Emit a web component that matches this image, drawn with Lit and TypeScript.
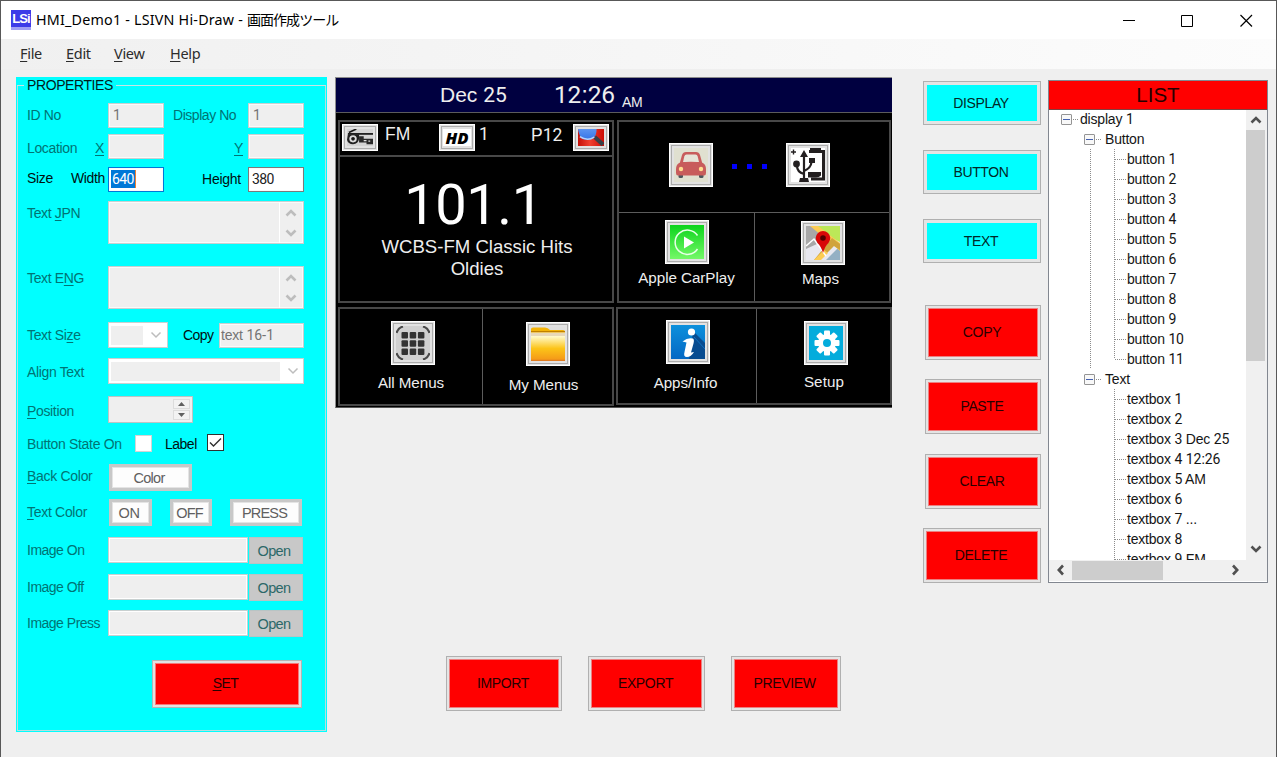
import { LitElement, html, css, svg } from "lit";
import { customElement, property } from "lit/decorators.js";
import { classMap } from "lit/directives/class-map.js";

/** Numerals are set in their own face, the rest in the inherited one. */
const num = (s: string) =>
  s.split(/(\d+)/).map((p) => (/^\d/.test(p) ? html`<span class="n">${p}</span>` : p));

/** Label with one mnemonic letter, marked by a leading "&". */
const mn = (s: string) => {
  const i = s.indexOf("&");
  return i < 0 ? html`${s}` : html`${s.slice(0, i)}<u>${s[i + 1]}</u>${s.slice(i + 2)}`;
};

const chevron = (dir: "up" | "down" | "left" | "right", color = "#505050", w = 2.6) => {
  const d = {
    up: "M1.500 8.500 6 4 10.500 8.500",
    down: "M1.500 3.500 6 8 10.500 3.500",
    left: "M8 1.500 3.800 6 8 10.500",
    right: "M4 1.500 8.200 6 4 10.500",
  }[dir];
  return html`<svg width="12" height="12" viewBox="0 0 12 12" fill="none" stroke=${color} stroke-width=${w}><path d=${d} /></svg>`;
};

const icons: Record<string, unknown> = {
  car: svg`<rect width="34" height="34" fill="#e0e0d0"/>
    <rect x="4.500" y="24" width="4.500" height="6" rx="1.500" fill="#4c545c"/><rect x="25" y="24" width="4.500" height="6" rx="1.500" fill="#4c545c"/>
    <path d="M5.500 16 8 7Q9 4 12 4h10Q25 4 26 7L28.500 16Z" fill="#c85c5c"/>
    <path d="M9 14 10.300 8.500Q10.800 6.500 12.500 6.500h9Q23.200 6.500 23.700 8.500L25 14Z" fill="#e6e4d8"/>
    <path d="M5 15Q17 12.500 29 15 32 17 32 21v4Q32 27.500 30 27.500H4Q2 27.500 2 25v-4Q2 17 5 15Z" fill="#c85c5c"/>
    <circle cx="7" cy="21" r="2.200" fill="#ffdc90"/><circle cx="27" cy="21" r="2.200" fill="#ffdc90"/>`,
  usb: svg`<rect width="34" height="34" fill="#fff"/>
    <g stroke="#231f20" fill="none"><path d="M2.500 1.500v5M0 4h5" stroke-width="1.400"/>
    <path d="M13 6v25M13 26Q6 24 6 18M13 23Q20 20 20.500 14" stroke-width="2.200"/>
    <path d="M18 3.500h14.500V31H20" stroke-width="3"/></g>
    <g fill="#231f20"><path d="M13 2 17 9H9ZM9 30h8l1 4H8Z"/><circle cx="5.500" cy="16" r="3.400"/>
    <path d="M18 10h6v5h-6ZM19 0h11v4H19ZM17 24h13v3.500q-2 2-5 2h-8Z"/></g>`,
  carplay: svg`<defs><linearGradient id="cp" x2="0" y2="1"><stop stop-color="#0cd41c"/><stop offset="1" stop-color="#74f868"/></linearGradient></defs>
    <rect width="34" height="34" fill="url(#cp)"/>
    <path d="M27.500 10.500A12.200 12.200 0 1 0 27.500 24" fill="none" stroke="#e8ffe8" stroke-width="1.500"/><path d="M14 11.500v12L24 17.500Z" fill="#fff"/>`,
  maps: svg`<rect width="34" height="34" fill="#e8e8f0"/><path d="M0 0h9L22 13 0 23Z" fill="#a8a8a8"/>
    <path d="M10 0h24v16L26 12Z" fill="#bce858"/><path d="M34 20v14H20Z" fill="#94b0c4"/>
    <path d="M4 0h8L34 17v8L26 18Z" fill="#fccc54"/><path d="M26 12 34 18v6l-6-4-14 14H8Z" fill="#d0a43c"/><path d="M8 34 18 24l4 3-7 7Z" fill="#fccc54"/>
    <path d="M0 20 8 13 20 30" fill="none" stroke="#fff" stroke-width="1.500"/>
    <path d="M17 27Q15 20 11.500 17A7.300 7.300 0 1 1 22.500 17Q19 20 17 27Z" fill="#d80808"/><circle cx="17" cy="12" r="2.800" fill="#500"/>`,
  menus: svg`<rect width="34" height="34" rx="6" fill="#d0d0d0"/>
    <path d="M.5 7Q2 2 7 .5M27 .5Q32 2 33.500 7M33.500 27Q32 32 27 33.500M7 33.500Q2 32 .5 27" fill="none" stroke="#484848" stroke-width="2.200"/>
    ${[0, 1, 2].map((r) => [0, 1, 2].map((c) => svg`<rect x=${5.5 + c * 8.2} y=${6 + r * 8.2} width="6.500" height="6.500" rx="1" fill="#333"/>`))}`,
  folder: svg`<defs><linearGradient id="fo" x2="0" y2="1"><stop stop-color="#fffbd0"/><stop offset=".5" stop-color="#fcc418"/><stop offset="1" stop-color="#f49418"/></linearGradient></defs>
    <rect width="34" height="34" fill="#e0e0e0"/><path d="M0 33V2Q0 .5 2 .5h12q3 0 5 2.500h13q2 0 2 2v28Z" fill="#f4b408"/>
    <path d="M0 5.500h34V9H0Z" fill="#e8d8b8"/><path d="M0 4.500h34" stroke="#c08000" stroke-width="1"/>
    <rect y="9" width="34" height="25" fill="url(#fo)"/><path d="M0 33.300h34" stroke="#e07c20" stroke-width="1.300"/>`,
  info: svg`<defs><linearGradient id="in" x2="0" y2="1"><stop stop-color="#0c90dc"/><stop offset="1" stop-color="#0468c4"/></linearGradient></defs>
    <rect width="34" height="34" fill="url(#in)"/><path d="M22 6 34 18v16H18L21 14Z" fill="#084c90"/><path d="M23 12 34 24" stroke="#1070c0"/>
    <circle cx="20.500" cy="7" r="3.600" fill="#fff"/><path d="M11.500 16.500Q17 12 22 13.500q1.500 1 .5 5l-2.500 9 3-.5Q20 32 16 32t-2.500-5l2-9.500Z" fill="#fff"/>`,
  setup: svg`<rect width="34" height="34" fill="#04acdc"/><g transform="translate(18 17)" fill="#fff">
    ${[0, 45, 90, 135].map((a) => svg`<rect x="-3" y="-12.500" width="6" height="25" rx="1" transform=${`rotate(${a})`}/>`)}
    <circle r="9"/><circle r="4" fill="#04acdc"/></g>`,
  radio: svg`<rect width="28" height="19" fill="#d4d4d4"/><path d="M2 4 10 0" stroke="#181818" stroke-width="1.800"/>
    <path d="M1 5.500H28" stroke="#202020" stroke-width="2"/>
    <path d="M1 6h12v5q-1 6-6.500 6T0 12Z" fill="#202020"/><circle cx="6.500" cy="11" r="4" fill="#ddd"/><circle cx="6.500" cy="11" r="2" fill="#181818"/>
    <path d="M13 8h5v3h10v6h-7v-2h-8Z" fill="#282828"/><path d="M18 13h3M23 13.500h2" stroke="#ddd" stroke-width="1.500"/>`,
  search: svg`<defs><linearGradient id="se" x2="0" y2="1"><stop stop-color="#5c94f0"/><stop offset="1" stop-color="#3474e8"/></linearGradient>
    <linearGradient id="rd"><stop stop-color="#c41008"/><stop offset=".45" stop-color="#f04030"/><stop offset="1" stop-color="#cc0c04"/></linearGradient></defs>
    <rect width="28" height="19" fill="url(#rd)"/><path d="M18 9 27 17.500" stroke="#384048" stroke-width="4.500"/>
    <path d="M0 0H20Q20 8 16 10.500 10 13.500 4 10.500 1 7 0 0Z" fill="url(#se)"/><path d="M2 8.500Q10 14 17.500 9" stroke="#b4d4fc" stroke-width="1.600" fill="none"/>`,
};

@customElement("hmi-tile")
export class HmiTile extends LitElement {
  @property() icon = "";
  @property({ type: Boolean }) small = false;
  static styles = css`
    :host { display: block; flex: none; }
    .tile { box-sizing: border-box; width: 44px; height: 44px; border: 1px solid #fff; background: #e2e2e2; padding: 1px; }
    .tile.small { width: 36px; height: 27px; }
    .inner { box-sizing: border-box; width: 100%; height: 100%; border: 1px solid #acacac; display: flex; align-items: center; justify-content: center; }
    .hd { background: #fff; width: 28px; height: 17px; font: italic 900 16.500px/18px "Open Sans", sans-serif; color: #000; text-align: center; }
    svg { display: block; }
  `;
  render() {
    const s = this.small;
    return html`<div class=${classMap({ tile: true, small: s })}><div class="inner">
      ${this.icon === "hd"
        ? html`<div class="hd">HD</div>`
        : html`<svg width=${s ? 26 : 34} height=${s ? 17 : 34} viewBox=${s ? "0 0 28 19" : "0 0 34 34"} preserveAspectRatio="none">${icons[this.icon]}</svg>`}
    </div></div>`;
  }
}

@customElement("hmi-screen")
export class HmiScreen extends LitElement {
  static styles = css`
    :host { display: block; box-sizing: border-box; width: 557px; height: 331px; background: #000; border: 1px solid #8c8c8c; border-right: 0; border-bottom-color: #555; font-family: "Liberation Sans", Arial, sans-serif; color: #eee; }
    * { box-sizing: border-box; }
    .n { font-family: Roboto, sans-serif; }
    .head { height: 35px; background: #000040; border-bottom: 1px solid #5c5c5c; display: flex; white-space: nowrap; }
    .date { margin-left: 104px; width: 114px; font-size: 21px; line-height: 33px; }
    .time { width: 68px; font-size: 24.500px; line-height: 34px; letter-spacing: -.2px; }
    .ampm { font-size: 14px; line-height: 16px; padding-top: 16px; letter-spacing: -.3px; }
    .cols { display: flex; margin-top: 7px; padding-left: 2px; gap: 2px; }
    .box { border: 2px solid #484848; }
    .left { width: 277px; }
    .radio { width: 276px; height: 183px; }
    .tuner { height: 35px; border-bottom: 2px solid #484848; display: flex; padding: 2px 0 0 2px; line-height: 20px; font-size: 17.500px; }
    .fm { width: 54px; margin-left: 7px; }
    .chan { width: 41px; margin-left: 4px; }
    .preset { width: 42px; margin-left: 11px; line-height: 23px; }
    .freq { font: 56px/60px Roboto, sans-serif; text-align: center; margin: 18px 10px 0 0; padding-left: 5px; color: #fff; letter-spacing: -.4px; }
    .station { font-size: 18.600px; line-height: 21.500px; text-align: center; margin-top: 1px; padding-left: 2px; }
    .source { width: 274px; height: 183px; margin-left: 1px; }
    .top { height: 91px; border-bottom: 1px solid #5c5c5c; display: flex; padding: 21px 0 0 50px; }
    .dots { display: flex; gap: 10px; padding: 21px 19px 0 19px; }
    .dots i { width: 5px; height: 5px; background: #00f; }
    .pair { display: flex; height: 88px; }
    .cell { flex: none; display: flex; flex-direction: column; align-items: center; font-size: 15.200px; line-height: 18px; white-space: nowrap; letter-spacing: -.05px; }
    .cell + .cell { border-left: 1px solid #5c5c5c; }
    .play { width: 135px; padding-top: 7px; }
    .map { flex: 1; padding-top: 8px; padding-left: 1px; }
    .play span, .map span { margin-top: 5px; }
    .map span { margin-right: 4px; }
    .dock { margin-top: 4px; height: 99px; display: flex; }
    .all { width: 142px; padding-top: 12px; padding-left: 4px; }
    .my { flex: 1; padding-top: 13px; padding-right: 0; }
    .apps { width: 138px; padding-top: 11px; padding-left: 2px; }
    .setup { flex: 1; padding-top: 12px; padding-left: 4px; }
    .all span { margin: 9px 4px 0 0; }
    .my span { margin: 10px 8px 0 0; }
    .apps span { margin: 10px 5px 0 0; }
    .setup span { margin: 8px 3px 0 0; letter-spacing: .1px; }
    .right .dock { width: 276px; margin-left: 0; height: 98px; }
  `;
  render() {
    return html`
      <div class="head"><div class="date">Dec ${num("25")}</div><div class="time">${num("12:26")}</div><div class="ampm">AM</div></div>
      <div class="cols">
        <div class="left">
          <div class="box radio">
            <div class="tuner">
              <hmi-tile small icon="radio"></hmi-tile><span class="fm">FM</span>
              <hmi-tile small icon="hd"></hmi-tile><span class="chan">${num("1")}</span>
              <span class="preset">${num("P12")}</span><hmi-tile small icon="search"></hmi-tile>
            </div>
            <div class="freq">101.1</div>
            <div class="station">WCBS-FM Classic Hits<br />Oldies</div>
          </div>
          <div class="box dock">
            <div class="cell all"><hmi-tile icon="menus"></hmi-tile><span>All Menus</span></div>
            <div class="cell my"><hmi-tile icon="folder"></hmi-tile><span>My Menus</span></div>
          </div>
        </div>
        <div class="right">
          <div class="box source">
            <div class="top"><hmi-tile icon="car"></hmi-tile><div class="dots"><i></i><i></i><i></i></div><hmi-tile icon="usb"></hmi-tile></div>
            <div class="pair">
              <div class="cell play"><hmi-tile icon="carplay"></hmi-tile><span>Apple CarPlay</span></div>
              <div class="cell map"><hmi-tile icon="maps"></hmi-tile><span>Maps</span></div>
            </div>
          </div>
          <div class="box dock">
            <div class="cell apps"><hmi-tile icon="info"></hmi-tile><span>Apps/Info</span></div>
            <div class="cell setup"><hmi-tile icon="setup"></hmi-tile><span>Setup</span></div>
          </div>
        </div>
      </div>`;
  }
}

@customElement("props-panel")
export class PropsPanel extends LitElement {
  static styles = css`
    :host { display: block; width: 311px; height: 655px; background: #0ff; font: 14px/18px "Liberation Sans", Arial, sans-serif; letter-spacing: -.35px; color: #007474; white-space: nowrap; }
    * { box-sizing: border-box; }
    .n { font-family: Roboto, sans-serif; }
    u { text-underline-offset: 2px; }
    svg { display: block; }
    .legend { display: flex; align-items: center; height: 16px; color: #001c1c; letter-spacing: -.4px; }
    .legend::before { content: ""; width: 7px; height: 1px; background: #c8e4e4; margin: 0 3px 0 1px; }
    .legend::after { content: ""; flex: 1; height: 1px; background: #c8e4e4; margin: 0 1px 0 3px; }
    .frame { margin: -8px 1px 0; height: 646px; border: 1px solid #b8dcdc; border-top: 0; padding: 18px 0 0 9px; }
    .row { display: flex; align-items: flex-start; }
    .label { width: 81px; flex: none; }
    .on { color: #001010; }
    .field { width: 56px; height: 25px; flex: none; background: #efefef; border: 1px solid #c8d0d0; box-shadow: inset 0 0 0 1px #fafafa; padding: 0 4px; line-height: 23px; color: #747474; }
    .active { background: #fff; color: #222; border-color: #7a7a7a; padding-left: 3px; letter-spacing: -.6px; }
    .focus { border-color: #0078d7; padding-left: 2px; }
    .sel { background: #0078d7; color: #fff; display: inline-block; height: 18px; line-height: 18px; padding: 0 1px; border-right: 1px solid #f08030; }
    .id { height: 31px; } .loc { height: 33px; } .size { height: 33.500px; }
    .id .label { padding-top: 3px; }
    .id .mid { width: 84px; padding: 3px 0 0 9px; letter-spacing: -.45px; }
    .split { display: flex; justify-content: space-between; padding-right: 4px; }
    .loc .label { padding-top: 5px; } .loc .mid { width: 84px; padding: 5px 5px 0 0; text-align: right; }
    .size .label { padding-right: 3px; padding-top: 2px; } .size .mid { width: 84px; padding: 3px 7px 0 0; text-align: right; letter-spacing: -.25px; }
    .area { width: 196px; height: 43px; background: #efefef; border: 1px solid #c8d0d0; box-shadow: inset 0 0 0 1px #fafafa; display: flex; justify-content: flex-end; }
    .bar { width: 24px; border-left: 1px solid #fff; display: flex; flex-direction: column; justify-content: space-between; align-items: center; padding: 5px 2px 4px 0; }
    .ta { height: 65px; } .ta .label { padding-top: 3px; } .ta2 { height: 56.500px; }
    .combo { width: 60px; height: 26px; border: 1px solid #c8d0d0; background: #fff; padding: 2px 5px 2px 2px; display: flex; align-items: center; }
    .combo i { flex: 1; height: 19px; background: #efefef; margin-right: 7px; }
    .combo.wide { width: 196px; } .combo.wide { padding-right: 4px; }
    .ts { height: 36px; } .ts .label { padding-top: 4px; }
    .ts .copy { width: 51px; padding: 4px 0 0 15px; letter-spacing: -.6px; } .ts .field { width: 85px; padding: 0 1px; margin-top: 1px; letter-spacing: -.2px; }
    .al { height: 38px; } .al .label { padding-top: 5px; }
    .po { height: 38px; } .po .label { padding-top: 6px; }
    .spin { width: 85px; height: 27px; background: #efefef; border: 1px solid #bcc4c4; padding: 2px; display: flex; justify-content: flex-end; }
    .arrows { width: 17px; display: grid; grid-template-rows: 1fr 1fr; gap: 1px; }
    .arrows b { border: 1px solid #dcdcdc; background: #f2f2f2; display: flex; align-items: center; justify-content: center; }
    .bs { height: 30px; padding-top: 1px; } .bs .label { width: 108px; padding-top: 0; letter-spacing: -.33px; }
    .bs .lbl { width: 72px; padding-left: 13px; letter-spacing: -.5px; }
    .bs .lbl { width: 55px; }
    .chk { width: 17px; height: 17px; flex: none; background: #fff; border: 1px solid #d4d4d4; }
    .chk.ticked { border: 1px solid #303030; margin-top: -1px; }
    .bc { height: 35px; } .bc .label, .tc .label { width: 82px; padding-top: 3px; letter-spacing: -.3px; } .tc { height: 38px; } .tc .label { padding-top: 4px; }
    .btn { height: 27px; border: 3px solid #c8c8c8; background: #fdfdfd; box-shadow: inset 0 0 0 1px #e4e4e4; color: #606060; text-align: center; line-height: 22px; flex: none; font-size: 14.500px; }
    .b1 { width: 83px; padding-right: 3px; letter-spacing: -.7px; } .b2 { width: 43px; margin-right: 18px; padding-right: 3px; letter-spacing: -.3px; } .b3 { width: 42px; margin-right: 18px; padding-right: 3px; letter-spacing: -.8px; } .b4 { width: 72px; padding-right: 3px; letter-spacing: -.8px; }
    .im { height: 36.700px; } .im .label { padding-top: 4px; letter-spacing: -.5px; } .im .field { width: 140px; height: 26px; box-shadow: inset 0 0 0 1px #fff; }
    .open { width: 54px; height: 27px; background: #c8c8c8; border: 1px solid #b8c4c4; margin-left: 1px; line-height: 26px; text-align: center; color: #2c6868; font-size: 14.500px; padding-right: 4px; letter-spacing: -.6px; }
    .set { margin: 13px 0 0 125px; width: 150px; height: 48px; background: #f00; border: 1px solid #b4b4b4; box-shadow: inset 0 0 0 2px #e1e1e1, inset 0 0 0 3px #f47878; color: #280000; text-align: center; line-height: 44px; padding-right: 3px; letter-spacing: -.5px; }
  `;
  private area(label: string, second = false) {
    return html`<div class=${classMap({ row: true, ta: true, ta2: second })}>
      <div class="label">${mn(label)}</div>
      <div class="area"><div class="bar">${chevron("up", "#bdbdbd")}${chevron("down", "#bdbdbd")}</div></div>
    </div>`;
  }
  render() {
    return html`
      <div class="legend">PROPERTIES</div>
      <div class="frame">
        <div class="row id"><div class="label">ID No</div><div class="field">${num("1")}</div><div class="mid">Display No</div><div class="field">${num("1")}</div></div>
        <div class="row loc"><div class="label split"><span>Location</span><u>X</u></div><div class="field"></div><div class="mid"><u>Y</u></div><div class="field"></div></div>
        <div class="row size on"><div class="label split"><span>Size</span><span>Width</span></div><div class="field active focus"><span class="sel">${num("640")}</span></div><div class="mid">Height</div><div class="field active">${num("380")}</div></div>
        ${this.area("Text &JPN")} ${this.area("Text E&NG", true)}
        <div class="row ts"><div class="label">${mn("Text Si&ze")}</div><div class="combo"><i></i>${chevron("down", "#bdbdbd", 1.5)}</div><div class="copy on">Copy</div><div class="field">text ${num("16-1")}</div></div>
        <div class="row al"><div class="label">Align Text</div><div class="combo wide"><i></i>${chevron("down", "#bdbdbd", 1.5)}</div></div>
        <div class="row po"><div class="label">${mn("&Position")}</div>
          <div class="spin"><div class="arrows">
            <b><svg width="7" height="4"><path d="M0 4 3.500 0 7 4Z" fill="#606060" /></svg></b>
            <b><svg width="7" height="4"><path d="M0 0 3.500 4 7 0Z" fill="#606060" /></svg></b>
          </div></div>
        </div>
        <div class="row bs"><div class="label">Button State On</div><div class="chk"></div><div class="lbl on">Label</div>
          <div class="chk ticked"><svg width="15" height="15"><path d="M2 7.500 5.500 11 13 3.500" fill="none" stroke="#303030" stroke-width="1.400" /></svg></div></div>
        <div class="row bc"><div class="label">${mn("&Back Color")}</div><div class="btn b1">Color</div></div>
        <div class="row tc"><div class="label">${mn("&Text Color")}</div><div class="btn b2">ON</div><div class="btn b3">OFF</div><div class="btn b4">PRESS</div></div>
        ${["Image On", "Image Off", "Image Press"].map((l) => html`<div class="row im"><div class="label">${l}</div><div class="field"></div><div class="open">Open</div></div>`)}
        <div class="set">${mn("&SET")}</div>
      </div>`;
  }
}

const tree: [number, string][] = [
  [0, "display 1"],
  [1, "Button"],
  ...Array.from({ length: 11 }, (_, i): [number, string] => [2, `button ${i + 1}`]),
  [1, "Text"],
  ...["1", "2", "3 Dec 25", "4 12:26", "5 AM", "6", "7 ...", "8", "9 FM"].map((t): [number, string] => [3, `textbox ${t}`]),
];

@customElement("object-list")
export class ObjectList extends LitElement {
  static styles = css`
    :host { display: block; box-sizing: border-box; width: 220px; height: 503px; border: 1px solid #828790; background: #fff; font: 14px/20px "Liberation Sans", Arial, sans-serif; color: #151515; }
    * { box-sizing: border-box; }
    .n { font-family: Roboto, sans-serif; }
    svg { display: block; }
    .title { height: 29px; background: #f00; border-bottom: 1px solid #804040; color: #280000; font-size: 20.500px; line-height: 28px; text-align: center; }
    .grid { display: grid; grid-template-columns: 197px 19px; grid-template-rows: 450px 20px; height: 471px; background: #f0f0f0; }
    .tree { overflow: hidden; height: 450px; background: #fff; white-space: pre; }
    .node { height: 20px; display: flex; letter-spacing: -.2px; }
    .node:first-child { margin-top: -1px; }
    .l0 { padding-left: 12px; }
    .l1 { padding-left: 35px; }
    .vline { width: 1px; height: 20px; background: repeating-linear-gradient(#8c8c8c 0 1px, #fff 1px 2px); }
    .half { height: 10px; }
    .gap1 { margin-left: 41px; margin-right: 23px; }
    .clear { background: none; }
    .hline { height: 1px; margin-top: 10px; background: repeating-linear-gradient(90deg, #8c8c8c 0 1px, #fff 1px 2px); }
    .l2 .hline { width: 11px; margin-right: 1px; }
    .l0 .hline, .l1 .hline { width: 5px; margin-left: 1px; margin-right: 2px; }
    .l1 .hline { margin-right: 4px; }
    .box { width: 11px; height: 11px; border: 1px solid #949494; border-radius: 1px; background: #f8f8f8; margin-top: 5px; display: flex; align-items: center; justify-content: center; }
    .box::before { content: ""; width: 7px; height: 1px; background: #4460b0; }
    .v { display: flex; flex-direction: column; align-items: center; padding: 4px 0 5px; }
    .thumb { width: 19px; height: 231px; background: #cdcdcd; margin-top: 4px; }
    .down { margin-top: auto; }
    .h { display: flex; align-items: center; padding: 0 5px 0 6px; }
    .hthumb { width: 91px; height: 19px; background: #cdcdcd; margin-left: 5px; }
    .right { margin-left: auto; }
  `;
  private node([lvl, t]: [number, string], i: number) {
    if (lvl < 2) return html`<div class="node l${lvl}"><span class="box"></span><span class="hline"></span><span>${num(t)}</span></div>`;
    const last = lvl === 2 && tree[i + 1]?.[0] === 1;
    return html`<div class="node l2">
      <span class=${classMap({ vline: true, gap1: true, clear: lvl === 3 })}></span><span class=${classMap({ vline: true, half: last })}></span><span class="hline"></span><span>${num(t)}</span></div>`;
  }
  render() {
    return html`<div class="title">LIST</div>
      <div class="grid">
        <div class="tree">${tree.map((n, i) => this.node(n, i))}</div>
        <div class="v">${chevron("up")}<div class="thumb"></div><div class="down">${chevron("down")}</div></div>
        <div class="h">${chevron("left")}<div class="hthumb"></div><div class="right">${chevron("right")}</div></div>
        <div></div>
      </div>`;
  }
}

@customElement("app-root")
export class AppRoot extends LitElement {
  static styles = css`
    :host { display: block; width: 1277px; height: 757px; overflow: hidden; box-sizing: border-box; border: 1px solid #585858; border-bottom: 0; background: #efefef; font-family: "Liberation Sans", Arial, sans-serif; }
    * { box-sizing: border-box; }
    svg { display: block; }
    .titlebar { height: 38px; background: #fff; display: flex; align-items: center; padding-left: 10px; }
    .logo { width: 20px; height: 20px; background: linear-gradient(#3c3ce8 17px, #a0a0f4 17px); color: #fff; font: bold 13px/18px "Liberation Sans", sans-serif; letter-spacing: -.9px; text-align: center; margin-top: -1px; }
    .name { font: 14.300px/20px "Noto Sans", "Noto Sans CJK JP", sans-serif; color: #000; margin-left: 5px; margin-top: -2px; white-space: nowrap; letter-spacing: .21px; }
    .jp { font-family: "Noto Sans CJK JP", sans-serif; font-size: 14px; letter-spacing: -.95px; }
    .ctl { margin-left: auto; display: flex; gap: 46px; padding-right: 23px; }
    .menu { height: 30px; background: linear-gradient(90deg, #f0f0f0, #fcfcfc); display: flex; padding: 4px 0 0 19px; font: 14.500px/20px "Noto Sans", sans-serif; color: #2c2c2c; letter-spacing: -.3px; }
    .menu span { width: 48px; } .menu .v { width: 56px; } .menu .f { width: 46px; }
    .menu u { text-underline-offset: 2px; }
    .body { display: flex; align-items: flex-start; padding: 8px 0 0 15px; }
    .center { margin-left: 8px; width: 588px; }
    .file { display: flex; padding: 248px 0 0 111px; }
    .side { width: 118px; display: flex; flex-direction: column; align-items: flex-end; padding-top: 4px; }
    object-list { margin: 3px 0 0 7px; }
    .cmd { width: 116px; height: 55px; background: #f00; border: 1px solid #b0b0b0; box-shadow: inset 0 0 0 2px #e4e4e4, inset 0 0 0 3px #ec8080; color: #280000; font-size: 14px; letter-spacing: -.35px; display: flex; align-items: center; justify-content: center; padding-right: 2px; padding-bottom: 1px; flex: none; }
    .cyan { width: 118px; height: 44px; background: #0ff; box-shadow: inset 0 0 0 3px #e4e4e4; color: #002828; margin-bottom: 25px; padding-right: 2px; }
    .copy { margin-top: 17px; }
    .copy, .clear { margin-bottom: 19px; }
    .paste { margin-bottom: 20px; }
    .delete { width: 118px; }
    .imp { margin-right: 26px; } .exp { width: 117px; margin-right: 26px; } .pre { width: 110px; padding-right: 3px; }
  `;
  render() {
    return html`
      <div class="titlebar">
        <div class="logo">LSi</div>
        <div class="name">HMI_Demo1 - LSIVN Hi-Draw - <span class="jp">画面作成ツール</span></div>
        <div class="ctl">
          <svg width="13" height="13"><path d="M1 6.500h12" stroke="#000" /></svg>
          <svg width="13" height="13"><path d="M.5 1.500h11v11H.5Z" fill="none" stroke="#000" /></svg>
          <svg width="13" height="13"><path d="M.5 1 12 12.500M12 1 .5 12.500" stroke="#000" stroke-width="1.200" /></svg>
        </div>
      </div>
      <div class="menu"><span class="f">${mn("&File")}</span><span>${mn("&Edit")}</span><span class="v">${mn("&View")}</span><span>${mn("&Help")}</span></div>
      <div class="body">
        <props-panel></props-panel>
        <div class="center">
          <hmi-screen></hmi-screen>
          <div class="file"><div class="cmd imp">IMPORT</div><div class="cmd exp">EXPORT</div><div class="cmd pre">PREVIEW</div></div>
        </div>
        <div class="side">
          ${["DISPLAY", "BUTTON", "TEXT"].map((t) => html`<div class="cmd cyan">${t}</div>`)}
          ${["COPY", "PASTE", "CLEAR", "DELETE"].map((t) => html`<div class="cmd ${t.toLowerCase()}">${t}</div>`)}
        </div>
        <object-list></object-list>
      </div>`;
  }
}
